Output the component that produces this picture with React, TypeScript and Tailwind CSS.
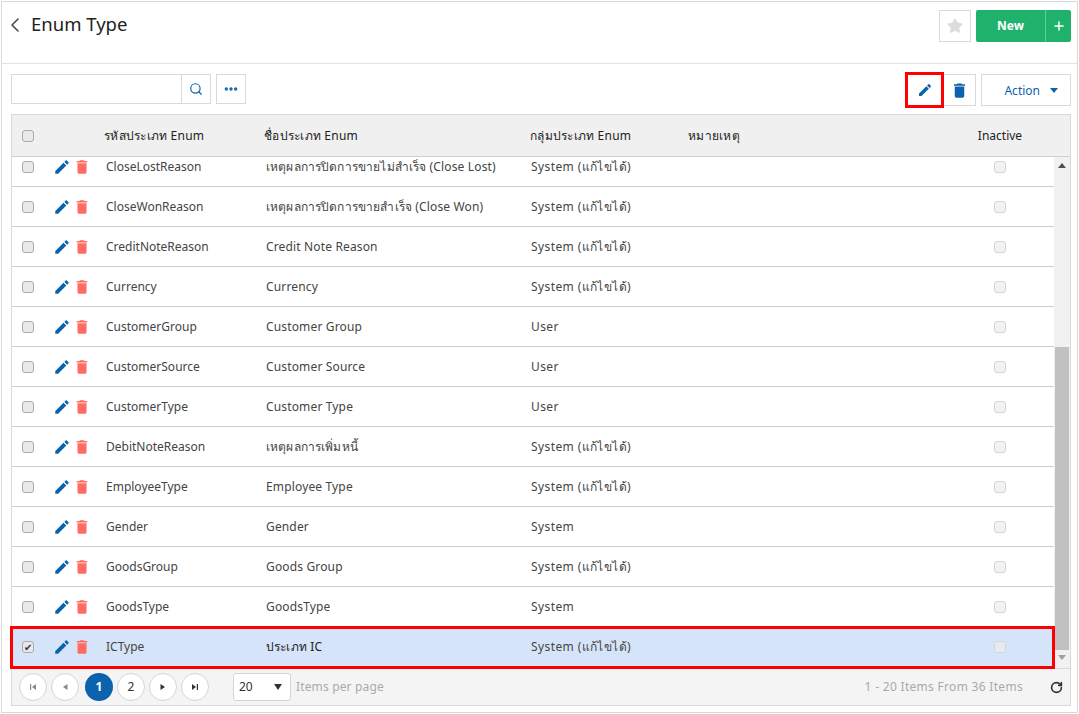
import { ChevronLeft, MoreHorizontal, Search, Star, Plus, RotateCw } from 'lucide-react'

type EnumRow = { code: string; name: string; group: string; selected?: boolean }

const ROWS: EnumRow[] = [
  { code: 'CloseLostReason', name: 'เหตุผลการปิดการขายไม่สำเร็จ (Close Lost)', group: 'System (แก้ไขได้)' },
  { code: 'CloseWonReason', name: 'เหตุผลการปิดการขายสำเร็จ (Close Won)', group: 'System (แก้ไขได้)' },
  { code: 'CreditNoteReason', name: 'Credit Note Reason', group: 'System (แก้ไขได้)' },
  { code: 'Currency', name: 'Currency', group: 'System (แก้ไขได้)' },
  { code: 'CustomerGroup', name: 'Customer Group', group: 'User' },
  { code: 'CustomerSource', name: 'Customer Source', group: 'User' },
  { code: 'CustomerType', name: 'Customer Type', group: 'User' },
  { code: 'DebitNoteReason', name: 'เหตุผลการเพิ่มหนี้', group: 'System (แก้ไขได้)' },
  { code: 'EmployeeType', name: 'Employee Type', group: 'System (แก้ไขได้)' },
  { code: 'Gender', name: 'Gender', group: 'System' },
  { code: 'GoodsGroup', name: 'Goods Group', group: 'System (แก้ไขได้)' },
  { code: 'GoodsType', name: 'GoodsType', group: 'System' },
  { code: 'ICType', name: 'ประเภท IC', group: 'System (แก้ไขได้)', selected: true },
]

const COLUMNS = 'grid grid-cols-[32px_60px_160px_265px_158px_263px_100px] items-center'

function PencilIcon({ className }: { className: string }) {
  return (
    <svg viewBox="0 0 24 24" fill="currentColor" className={className}>
      <path d="M3 17.25V21h3.75L17.81 9.94l-3.75-3.75L3 17.25zM20.71 7.04c.39-.39.39-1.02 0-1.41l-2.34-2.34c-.39-.39-1.02-.39-1.41 0l-1.83 1.83 3.75 3.75 1.83-1.83z" />
    </svg>
  )
}

function TrashIcon({ className }: { className: string }) {
  return (
    <svg viewBox="0 0 24 24" fill="currentColor" className={className}>
      <path d="M6 19c0 1.1.9 2 2 2h8c1.1 0 2-.9 2-2V7H6v12zM19 4h-3.5l-1-1h-5l-1 1H5v2h14V4z" />
    </svg>
  )
}

function Check({ checked = false, faded = false }: { checked?: boolean; faded?: boolean }) {
  return (
    <span
      className={`flex h-3 w-3 items-center justify-center rounded-[3px] border text-[10px] leading-none text-[#333] ${
        faded ? 'border-[#d5d5d5] bg-[#ededed]/70' : 'border-[#a9a9a9] bg-[#e9e9e9]'
      }`}
    >
      {checked && '✔'}
    </span>
  )
}

function PagerButton({ children }: { children: React.ReactNode }) {
  return (
    <span className="flex h-7 w-7 items-center justify-center rounded-full border border-[#d5d5d5] bg-white text-[#333]">
      {children}
    </span>
  )
}

function PagerGlyph({ points, bar, className }: { points: string; bar?: string; className: string }) {
  return (
    <svg viewBox="0 0 8 8" fill="currentColor" className={`h-2 w-2 ${className}`}>
      <polygon points={points} />
      {bar && <path d={bar} />}
    </svg>
  )
}

export default function App() {
  return (
    <div className="h-[714px] w-[1079px] bg-white p-px font-['Noto_Sans','Liberation_Sans',sans-serif] text-[12px] text-[#444]">
      <div className="h-[712px] w-[1077px] border border-[#d9d9d9]">
        <header className="flex h-[62px] items-start justify-between border-b border-[#e3e3e3] pr-[6px] pt-2">
          <div className="mt-[2px] flex items-center">
            <ChevronLeft className="ml-px h-6 w-6 text-[#444]" strokeWidth={1.5} />
            <h1 className="-mt-[2px] ml-1 text-[18.5px] leading-[28px] text-[#222]">Enum Type</h1>
          </div>
          <div className="flex">
            <span className="mr-[5px] flex h-8 w-8 items-center justify-center border border-[#d9d9d9]">
              <Star className="h-4 w-4 fill-[#dcdcdc] text-[#dcdcdc]" />
            </span>
            <span className="flex h-8 w-[69px] items-center justify-center rounded-l-[2px] bg-[#20b26c] text-[12px] font-bold text-white">
              New
            </span>
            <span className="flex h-8 w-[26px] items-center justify-center rounded-r-[2px] border-l border-[#5fd09a] bg-[#20b26c] text-white">
              <Plus className="h-3.5 w-3.5" strokeWidth={2.5} />
            </span>
          </div>
        </header>

        <div className="flex h-[50px] items-start justify-between pl-[9px] pr-[6px] pt-[10px]">
          <div className="flex gap-[5px]">
            <div className="flex h-[30px] w-[200px] border border-[#d9d9d9]">
              <span className="flex-1" />
              <span className="flex w-[29px] items-center justify-center border-l border-[#d9d9d9] text-[#0b62ad]">
                <Search className="h-3.5 w-3.5" />
              </span>
            </div>
            <span className="flex h-[30px] w-[30px] items-center justify-center border border-[#d9d9d9] text-[#0b62ad]">
              <MoreHorizontal className="h-4 w-4" strokeWidth={3} />
            </span>
          </div>
          <div className="flex items-center gap-[5px]">
            <div className="relative flex h-8 w-[71px] items-center border border-[#d9d9d9]">
              <span className="flex w-[37px] justify-center text-[#0b62ad]">
                <PencilIcon className="h-4 w-4" />
              </span>
              <span className="flex w-[32px] justify-center text-[#0b62ad]">
                <TrashIcon className="h-[19px] w-[19px]" />
              </span>
              <span className="absolute -left-px -top-[3px] h-[36px] w-[39px] border-[3px] border-[#ff0000]" />
            </div>
            <div className="flex h-8 w-[90px] items-center justify-end gap-[10px] border border-[#d9d9d9] pr-[12px] text-[#0b62ad]">
              <span className="pt-px">Action</span>
              <span className="h-0 w-0 border-x-[4px] border-t-[5px] border-x-transparent border-t-[#0b62ad]" />
            </div>
          </div>
        </div>

        <section className="relative ml-[9px] w-[1060px] border border-[#d9d9d9]">
          <div className={`${COLUMNS} h-[42px] border-b border-[#cfcfcf] bg-[#f0f0f0] tracking-[0.25px] text-[#222]`}>
            <span className="flex justify-center">
              <Check />
            </span>
            <span />
            <span>รหัสประเภท Enum</span>
            <span>ชื่อประเภท Enum</span>
            <span className="pl-px">กลุ่มประเภท Enum</span>
            <span className="pl-px">หมายเหตุ</span>
            <span className="text-center tracking-normal">Inactive</span>
          </div>

          <div className="relative h-[511px] overflow-hidden">
            <div className="-mt-[10px] mr-[16px]">
              {ROWS.map((row) => (
                <div
                  key={row.code}
                  className={`${COLUMNS} h-10 border-b ${row.selected ? 'border-transparent bg-[#d6e4fa]' : 'border-[#cfcfcf]'}`}
                >
                  <span className="flex justify-center">
                    <Check checked={row.selected} />
                  </span>
                  <span className="flex items-center gap-[2px] pl-[9px]">
                    <PencilIcon className="h-[18px] w-[18px] text-[#0b62ad]" />
                    <TrashIcon className="h-[18px] w-[18px] text-[#ff6b61]" />
                  </span>
                  <span className="pl-[2px]">{row.code}</span>
                  <span className={`pl-[2px] tracking-[0.15px] ${row.selected ? 'text-[#222]' : ''}`}>{row.name}</span>
                  <span className="pl-[2px] tracking-[0.4px]">{row.group}</span>
                  <span />
                  <span className="flex justify-center">
                    <Check faded />
                  </span>
                </div>
              ))}
            </div>
            <div className="absolute bottom-0 right-0 top-0 flex w-[16px] flex-col items-center bg-[#f1f1f1]">
              <span className="mt-[6px] h-0 w-0 border-x-[4px] border-b-[5px] border-x-transparent border-b-[#505050]" />
              <span className="mt-[179px] h-[303px] w-[14px] bg-[#c1c1c1]" />
              <span className="mt-[5px] h-0 w-0 border-x-[4px] border-t-[5px] border-x-transparent border-t-[#a0a0a0]" />
            </div>
          </div>

          <span className="absolute -left-[2px] top-[511px] h-[43px] w-[1045px] border-[3px] border-[#ff0000]" />

          <footer className="flex h-[37px] items-center border-t border-[#d9d9d9] bg-[#f4f4f4] px-[7px]">
            <div className="flex gap-[4px]">
              <PagerButton>
                <PagerGlyph points="7,1 7,7 3,4" bar="M1 1h1.2v6H1z" className="text-[#888]" />
              </PagerButton>
              <PagerButton>
                <PagerGlyph points="6.5,1 6.5,7 2,4" className="text-[#888]" />
              </PagerButton>
              <span className="ml-[2px] flex h-7 w-7 items-center justify-center rounded-full bg-[#0b62ad] font-bold text-white">1</span>
              <PagerButton>2</PagerButton>
              <PagerButton>
                <PagerGlyph points="1.5,1 1.5,7 6,4" className="text-[#333]" />
              </PagerButton>
              <PagerButton>
                <PagerGlyph points="1,1 1,7 5,4" bar="M5.8 1H7v6H5.8z" className="text-[#333]" />
              </PagerButton>
            </div>
            <div className="ml-[24px] flex h-7 w-[58px] items-center justify-between rounded-[3px] border border-[#d5d5d5] bg-white pl-[5px] pr-[8px] text-[#333]">
              20
              <span className="h-0 w-0 border-x-[4px] border-t-[6px] border-x-transparent border-t-[#333]" />
            </div>
            <span className="ml-[5px] tracking-[0.15px] text-[#aaa]">Items per page</span>
            <span className="ml-auto tracking-[0.3px] text-[#aaa]">1 - 20 Items From 36 Items</span>
            <RotateCw className="ml-[27px] h-[13px] w-[13px] text-[#333]" strokeWidth={3} />
          </footer>
        </section>
      </div>
    </div>
  )
}
